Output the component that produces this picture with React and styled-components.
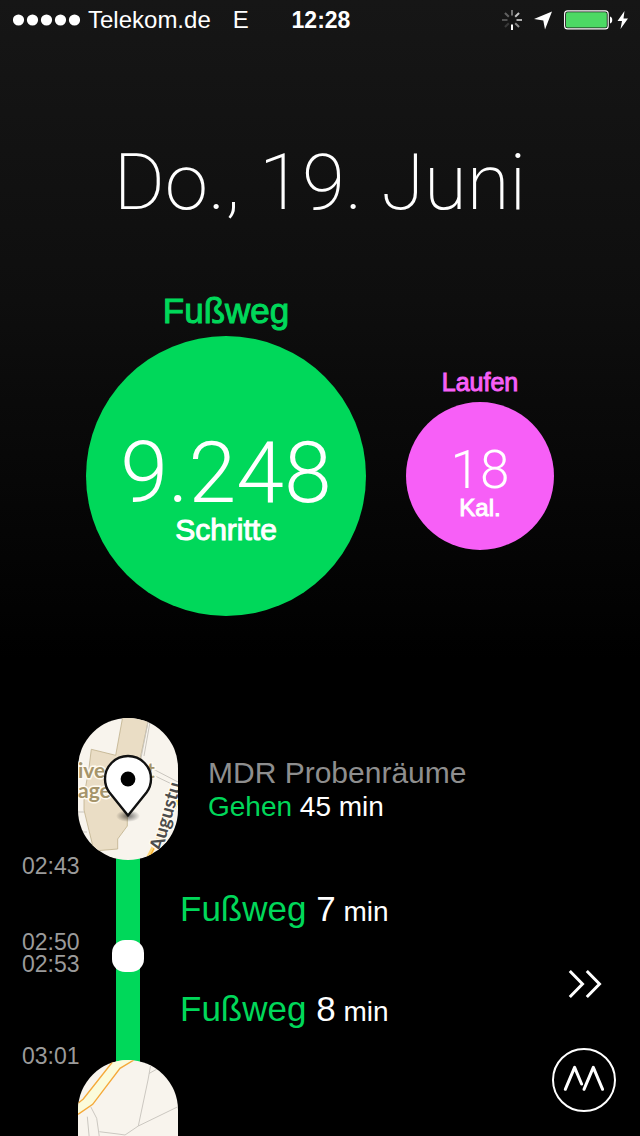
import React from "react";
import styled, { createGlobalStyle, css } from "styled-components";

const sans = `"Liberation Sans", Arial, sans-serif`;
const thin = `Roboto, "Liberation Sans", sans-serif`;
const green = "#00d85a";
const pink = "#f75ff7";

const GlobalStyle = createGlobalStyle`
  *, *::before, *::after { box-sizing: border-box; }
  body { margin: 0; background: #000; font-family: ${sans}; color: #fff; }
  h1, p { margin: 0; font-weight: 400; }
`;

const medium = css`
  -webkit-text-stroke: 1px currentColor;
`;

const Screen = styled.main`
  display: flex;
  flex-direction: column;
  height: 100vh;
  overflow: hidden;
  background: linear-gradient(#161616 0, #0e0e0e 300px, #000 660px);
`;

const StatusBar = styled.header`
  display: grid;
  grid-template-columns: 1fr auto 1fr;
  align-items: center;
  flex: none;
  height: 40px;
  padding: 0 11px 0 13px;
  font-size: 24px;
  line-height: 40px;
`;

const Carrier = styled.div`
  display: flex;
  align-items: center;
  gap: 8px;
`;

const Network = styled.span`
  margin-left: 14px;
`;

const Clock = styled.time`
  font-size: 23px;
  font-weight: 700;
`;

const StatusIcons = styled.div`
  display: flex;
  align-items: center;
  justify-content: flex-end;
  gap: 12px;
`;

const Power = styled.div`
  display: flex;
  align-items: center;
  gap: 4px;
`;

const Icon = styled.svg`
  display: block;
  flex: none;
`;

const Title = styled.h1`
  flex: none;
  margin-top: 99px;
  font-family: ${thin};
  font-weight: 200;
  font-size: 78px;
  line-height: 88px;
  text-align: center;
`;

const Metrics = styled.section`
  display: flex;
  flex: none;
  align-items: center;
  justify-content: center;
  gap: 40px;
  margin-top: 69px;
`;

const Metric = styled.div`
  display: flex;
  flex-direction: column;
  align-items: center;
`;

const MetricLabel = styled.p`
  height: 40px;
  color: ${(p) => p.$color};
  font-size: ${(p) => (p.$large ? 35 : 25)}px;
  line-height: ${(p) => (p.$large ? 30 : 40)}px;
  ${medium}
`;

const Bubble = styled.div`
  display: flex;
  flex-direction: column;
  align-items: center;
  justify-content: center;
  width: ${(p) => (p.$large ? 280 : 148)}px;
  aspect-ratio: 1;
  padding-top: ${(p) => (p.$large ? 28 : 16)}px;
  border-radius: 50%;
  background: ${(p) => p.$color};
`;

const Value = styled.span`
  font-family: ${thin};
  font-weight: 300;
  font-size: ${(p) => (p.$large ? 86 : 53)}px;
  line-height: ${(p) => (p.$large ? 80 : 48)}px;
`;

const Unit = styled.span`
  font-size: ${(p) => (p.$large ? 30 : 24)}px;
  line-height: ${(p) => (p.$large ? 34 : 28)}px;
  ${medium}
`;

const Timeline = styled.section`
  display: grid;
  grid-template-columns: 78px 100px 1fr;
  flex: 1;
  min-height: 0;
  margin-top: 102px;
  overflow: hidden;
`;

const Times = styled.div`
  display: flex;
  flex-direction: column;
  padding-top: 137px;
`;

const Span = styled.div`
  display: flex;
  flex-direction: column;
  align-items: flex-start;
  justify-content: space-between;
  flex: none;
  height: ${(p) => p.$height}px;
  padding-left: 22px;
  color: #9b9b9b;
  font-size: 23px;
  line-height: 22px;
`;

const Track = styled.div`
  display: flex;
  flex-direction: column;
  align-items: center;
`;

const Place = styled.div`
  position: relative;
  flex: none;
  width: 100%;
  height: 142px;
  border-radius: 50px;
  overflow: hidden;
  background: #f8f4ed;
`;

const Path = styled.div`
  flex: none;
  width: 24px;
  height: 208px;
  margin: -4px 0;
  padding-top: 84px;
  background: ${green};
`;

const Stop = styled.div`
  width: 32px;
  height: 32px;
  margin-left: -4px;
  border-radius: 13px;
  background: #fff;
`;

const Details = styled.div`
  display: flex;
  flex-direction: column;
`;

const PlaceInfo = styled.div`
  display: flex;
  flex-direction: column;
  justify-content: center;
  flex: none;
  height: 142px;
  padding: 2px 0 0 30px;
  font-size: 28px;
  line-height: 34px;
`;

const PlaceName = styled.p`
  color: #8e8e8e;
  font-size: 30px;
`;

const Activity = styled.span`
  color: ${green};
`;

const Leg = styled.p`
  flex: none;
  height: 100px;
  padding-left: 2px;
  font-size: 35px;
  line-height: 98px;
`;

const Minutes = styled.span`
  font-size: 28px;
`;

const Actions = styled.nav`
  position: fixed;
  right: 24px;
  bottom: 24px;
  display: flex;
  flex-direction: column;
  gap: 32px;
`;

const ActionButton = styled.button`
  width: 64px;
  height: 64px;
  padding: 0;
  border: 0;
  background: none;
  color: #fff;
  cursor: pointer;
`;

function SignalDots() {
  return (
    <Icon width="67" height="12" fill="#fff" aria-label="Signal">
      {[0, 1, 2, 3, 4].map((i) => (
        <circle key={i} cx={5.5 + i * 14} cy="6" r="5.6" />
      ))}
    </Icon>
  );
}

function Spinner() {
  const shades = [0.4, 0.75, 0.65, 0.5, 1, 0.15, 0.25, 0.32];
  return (
    <Icon width="20" height="20" viewBox="-10 -10 20 20" stroke="#fff" strokeWidth="2">
      {shades.map((o, i) => (
        <path key={i} d="M0-4.5V-10" opacity={o} transform={`rotate(${i * 45})`} />
      ))}
    </Icon>
  );
}

function LocationArrow() {
  return (
    <Icon width="18" height="20" viewBox="0 0 18 20" fill="#fff">
      <path d="M0 9 18 1.500 11 19.5 9.3 10.6Z" />
    </Icon>
  );
}

function Battery() {
  return (
    <Icon width="49" height="20" viewBox="0 0 49 20">
      <rect x="0.6" y="0.9" width="43.6" height="18" rx="3" fill="none" stroke="#fff" strokeWidth="1.1" />
      <rect x="2" y="2.3" width="40.8" height="15.2" rx="1.5" fill="#4cd964" />
      <path d="M46 6.5c3 .5 3 6.4 0 7Z" fill="#fff" />
    </Icon>
  );
}

function Bolt() {
  return (
    <Icon width="12" height="20" viewBox="0 0 12 20" fill="#fff">
      <path d="M7.5 1 .5 11H5L3.5 19 11 8.5H6.5Z" />
    </Icon>
  );
}

function VenueMap() {
  return (
    <Icon width="100" height="142" viewBox="0 0 100 142">
      <defs>
        <radialGradient id="pinShadow">
          <stop offset="0" stopColor="#000" stopOpacity="0.55" />
          <stop offset="1" stopColor="#000" stopOpacity="0" />
        </radialGradient>
      </defs>
      <path
        d="M13.3 31.3 37.7 37.3 44.7-1H71L62.5 39 68 60 49.3 98V108L39.7 121V131L16 133 6 92V78L11 50Z"
        fill="#eaddc5"
        stroke="#bfb08c"
        strokeWidth="0.8"
      />
      <g fill="none" stroke="#c9c5be" strokeWidth="1">
        <path d="M70 4 63 40M72 4 66 38M75 51 100 64M75 57 100 69M0 94 6 94M0 114H9" />
      </g>
      <path d="M100 82 70 140" stroke="#ffd777" strokeWidth="4" />
      <path d="M98 88 72 138" stroke="#f6a623" strokeWidth="1" />
      <g
        fontFamily="Lato, sans-serif"
        fontWeight="700"
        fontSize="21"
        fill="#a5946a"
        stroke="#fffaf0"
        strokeWidth="3"
        paintOrder="stroke"
      >
        <text x="0" y="60">ive</text>
        <text x="0" y="80">age</text>
        <text x="69" y="60">t</text>
        <text fill="#4c4c4c" fontSize="19" transform="translate(84 134) rotate(-74)">
          Augustu
        </text>
      </g>
      <ellipse cx="50" cy="98" rx="12" ry="6" fill="url(#pinShadow)" />
      <path
        d="M50 97.5 31.500 74.500C28.500 70.500 27 66 27 61a23 23 0 0 1 46 0C73 66 71.500 70.500 68.500 74.500Z"
        fill="#fff"
        stroke="#111"
        strokeWidth="2.4"
        strokeLinejoin="round"
      />
      <circle cx="50" cy="61" r="7.4" fill="#000" />
    </Icon>
  );
}

function StreetMap() {
  return (
    <Icon width="100" height="142" viewBox="0 0 100 142">
      <path d="M0 43.3 5.3 39 36 0H56L42 8.3 14.7 44.3 0 54.3Z" fill="#fbfbdb" />
      <g fill="none" stroke="#f5a93a" strokeWidth="1.4">
        <path d="M0 43.3 5.3 39 36 0M0 54.3 14.7 44.3 42 8.3 56 0" />
      </g>
      <g fill="none" stroke="#cbc7c0" strokeWidth="1">
        <path d="M73 3 70 20 60.3 66M71 13.5 79 9M100 46.7 60.3 66 47 75 40 74 21.3 71.7" />
        <path d="M12.7 46.7 18.7 58.3 21.5 78 24 100M9.3 56.7 11.5 80" />
      </g>
    </Icon>
  );
}

function ForwardIcon() {
  return (
    <Icon width="64" height="64" fill="none" stroke="#fff" strokeWidth="3">
      <path d="M17.8 19 30.5 32 17.8 45M34.8 19 47.5 32 34.8 45" />
    </Icon>
  );
}

function MovesLogo() {
  return (
    <Icon width="64" height="64" fill="none" stroke="#fff">
      <circle cx="32" cy="32" r="31" strokeWidth="2" />
      <path
        d="M13.3 41.3 22.6 19.3 29.6 36M32 41.3 41.3 19.3 50.6 41.3"
        strokeWidth="3"
        strokeLinecap="round"
        strokeLinejoin="round"
      />
    </Icon>
  );
}

function ActivityMetric({ label, value, unit, color, large }) {
  return (
    <Metric>
      <MetricLabel $color={color} $large={large}>{label}</MetricLabel>
      <Bubble $color={color} $large={large}>
        <Value $large={large}>{value}</Value>
        <Unit $large={large}>{unit}</Unit>
      </Bubble>
    </Metric>
  );
}

function WalkLeg({ minutes }) {
  return (
    <Leg>
      <Activity>Fußweg</Activity> {minutes}
      <Minutes> min</Minutes>
    </Leg>
  );
}

export default function App() {
  return (
    <>
      <GlobalStyle />
      <Screen>
        <StatusBar>
          <Carrier>
            <SignalDots />
            <span>Telekom.de</span>
            <Network>E</Network>
          </Carrier>
          <Clock>12:28</Clock>
          <StatusIcons>
            <Spinner />
            <LocationArrow />
            <Power>
              <Battery />
              <Bolt />
            </Power>
          </StatusIcons>
        </StatusBar>

        <Title>Do., 19. Juni</Title>

        <Metrics>
          <ActivityMetric label="Fußweg" value="9.248" unit="Schritte" color={green} large />
          <ActivityMetric label="Laufen" value="18" unit="Kal." color={pink} />
        </Metrics>

        <Timeline>
          <Times>
            <Span $height={98}>
              <time>02:43</time>
              <time>02:50</time>
            </Span>
            <Span $height={114}>
              <time>02:53</time>
              <time>03:01</time>
            </Span>
          </Times>
          <Track>
            <Place><VenueMap /></Place>
            <Path><Stop /></Path>
            <Place><StreetMap /></Place>
          </Track>
          <Details>
            <PlaceInfo>
              <PlaceName>MDR Probenräume</PlaceName>
              <p><Activity>Gehen</Activity> 45 min</p>
            </PlaceInfo>
            <WalkLeg minutes={7} />
            <WalkLeg minutes={8} />
          </Details>
        </Timeline>

        <Actions>
          <ActionButton type="button" aria-label="Weiter"><ForwardIcon /></ActionButton>
          <ActionButton type="button" aria-label="Moves"><MovesLogo /></ActionButton>
        </Actions>
      </Screen>
    </>
  );
}
